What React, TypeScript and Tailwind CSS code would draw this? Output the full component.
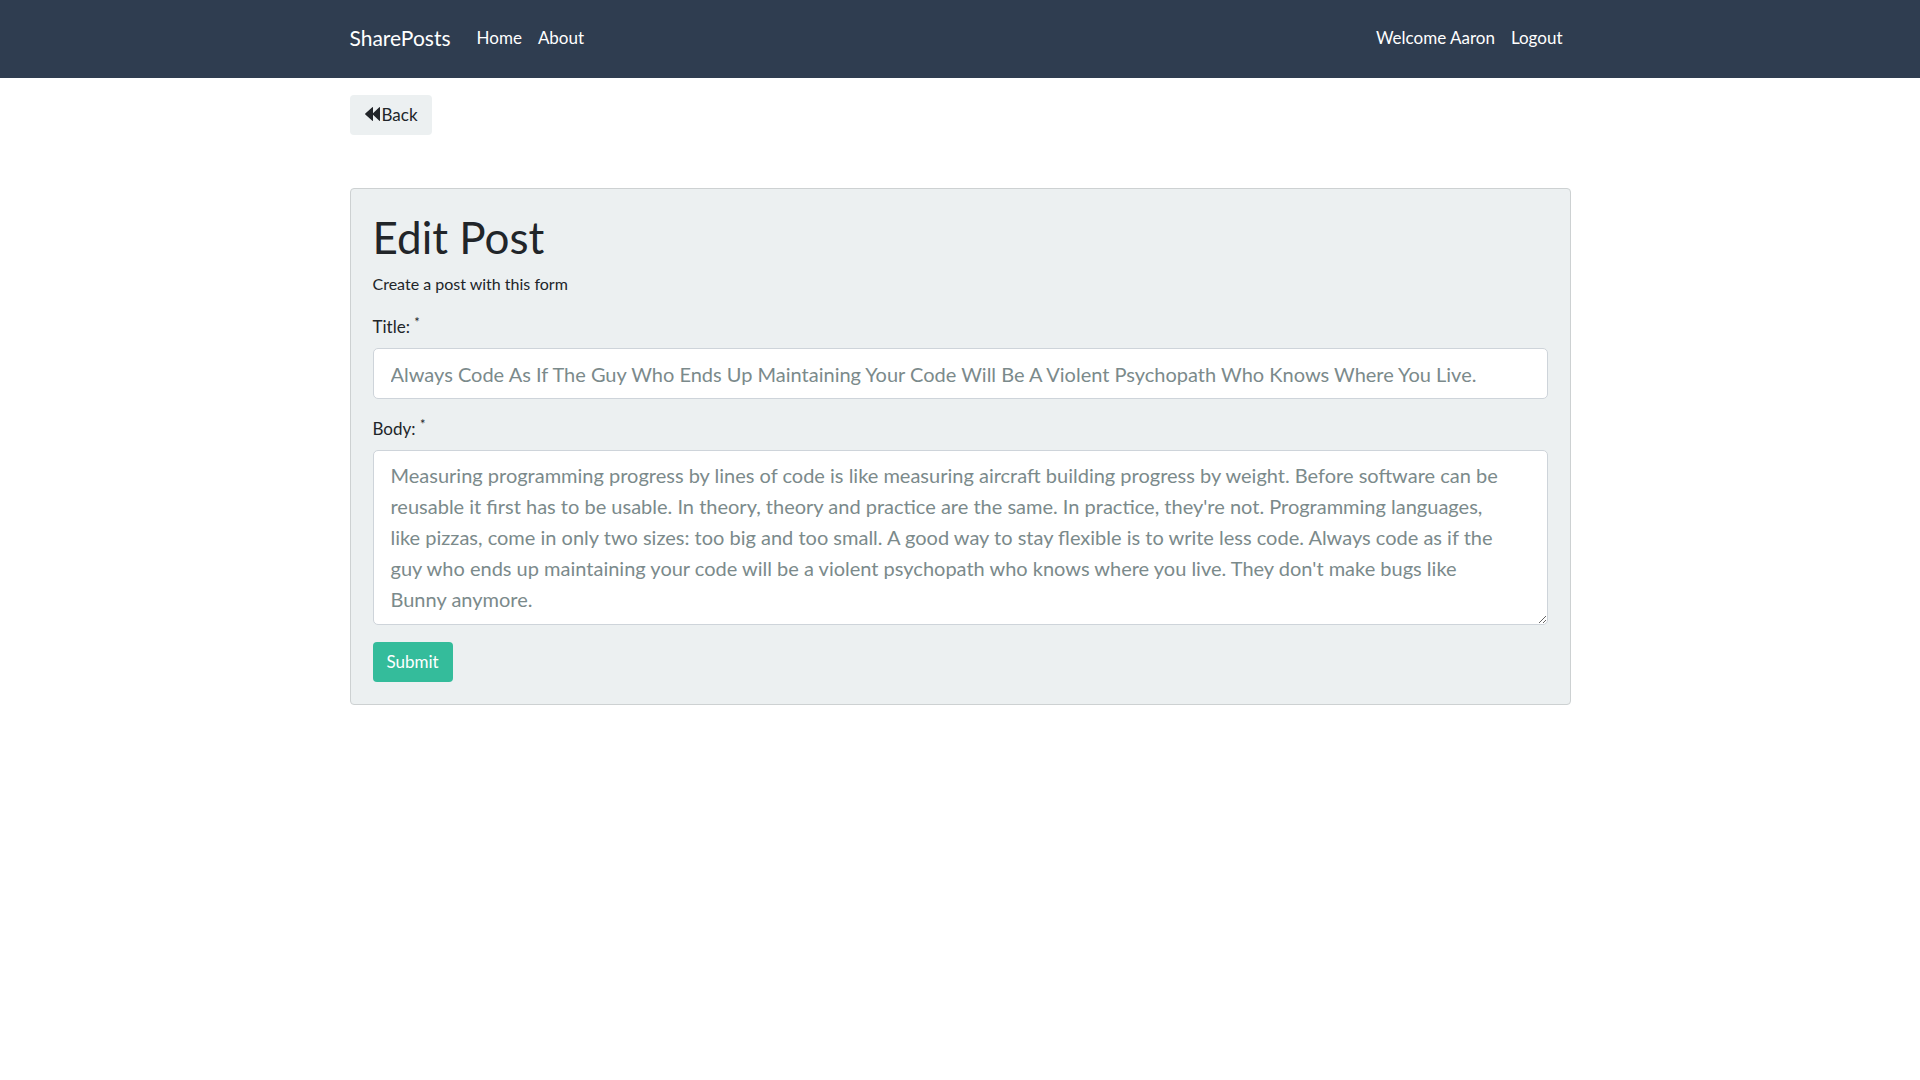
import React from "react";

const field =
  "block w-full rounded-[5px] border border-[#ced4da] bg-white pl-[17px] pr-[42px] text-[20px] leading-[31px] text-[#7b8a8b] outline-none";

const initialTitle =
  "Always Code As If The Guy Who Ends Up Maintaining Your Code Will Be A Violent Psychopath Who Knows Where You Live.";

const initialBody =
  "Measuring programming progress by lines of code is like measuring aircraft building progress by weight. Before software can be reusable it first has to be usable. In theory, theory and practice are the same. In practice, they're not. Programming languages, like pizzas, come in only two sizes: too big and too small. A good way to stay flexible is to write less code. Always code as if the guy who ends up maintaining your code will be a violent psychopath who knows where you live. They don't make bugs like Bunny anymore.";

function BackwardIcon() {
  return (
    <svg
      viewBox="0 0 15 14"
      className="mr-[2px] h-[14px] w-[15px]"
      fill="currentColor"
      aria-hidden="true"
    >
      <path d="M7.3 0.3 Q8 -0.2 8 0.6 V6.3 L14.3 0.3 Q15 -0.2 15 0.6 V13.4 Q15 14.2 14.3 13.7 L8 7.7 V13.4 Q8 14.2 7.3 13.7 L0.3 7.4 Q-0.1 7 0.3 6.6 Z" />
    </svg>
  );
}

function Navbar() {
  return (
    <nav className="bg-[#2f3d50] text-white">
      <div className="mx-auto flex h-[78px] max-w-[1253px] items-center px-4 pb-1">
        <a href="#" className="mr-[18px] text-[21px] leading-[31px]">
          SharePosts
        </a>
        <div className="flex flex-1 items-center">
          <a href="#" className="px-2">
            Home
          </a>
          <a href="#" className="px-2">
            About
          </a>
          <a href="#" className="ml-auto px-2">
            Welcome Aaron
          </a>
          <a href="#" className="px-2">
            Logout
          </a>
        </div>
      </div>
    </nav>
  );
}

function FieldLabel({ htmlFor, text }: { htmlFor: string; text: string }) {
  return (
    <label htmlFor={htmlFor} className="mb-[9px] block leading-[25px]">
      {text} <sup className="text-[13px]">*</sup>
    </label>
  );
}

export default function App() {
  return (
    <div className="min-h-screen bg-white font-['Lato',sans-serif] text-[17px] leading-[25px] text-[#212529]">
      <Navbar />
      <main className="mx-auto max-w-[1253px] px-4 pt-[17px]">
        <a
          href="#"
          className="inline-flex h-10 items-center rounded-[4px] bg-[#ecf0f1] pr-[14px] pb-[2px] pl-[15px]"
        >
          <BackwardIcon />
          Back
        </a>
        <section className="mt-[53px] rounded-[4px] border border-[#cdd1d2] bg-[#ecf0f1] p-[22px]">
          <h1 className="mb-[7px] text-[44px] leading-[53px]">Edit Post</h1>
          <p className="mb-[18px] text-base leading-[25px]">
            Create a post with this form
          </p>
          <form onSubmit={(e) => e.preventDefault()}>
            <div className="mb-[17px]">
              <FieldLabel htmlFor="title" text="Title:" />
              <input
                id="title"
                type="text"
                defaultValue={initialTitle}
                className={`${field} h-[51px]`}
              />
            </div>
            <div className="mb-[17px]">
              <FieldLabel htmlFor="body" text="Body:" />
              <textarea
                id="body"
                rows={5}
                defaultValue={initialBody}
                className={`${field} resize-y overflow-auto py-[9px]`}
              />
            </div>
            <button
              type="submit"
              className="block h-10 cursor-pointer rounded-[4px] bg-[#34bc9b] px-[14px] pb-[2px] text-white"
            >
              Submit
            </button>
          </form>
        </section>
      </main>
    </div>
  );
}
